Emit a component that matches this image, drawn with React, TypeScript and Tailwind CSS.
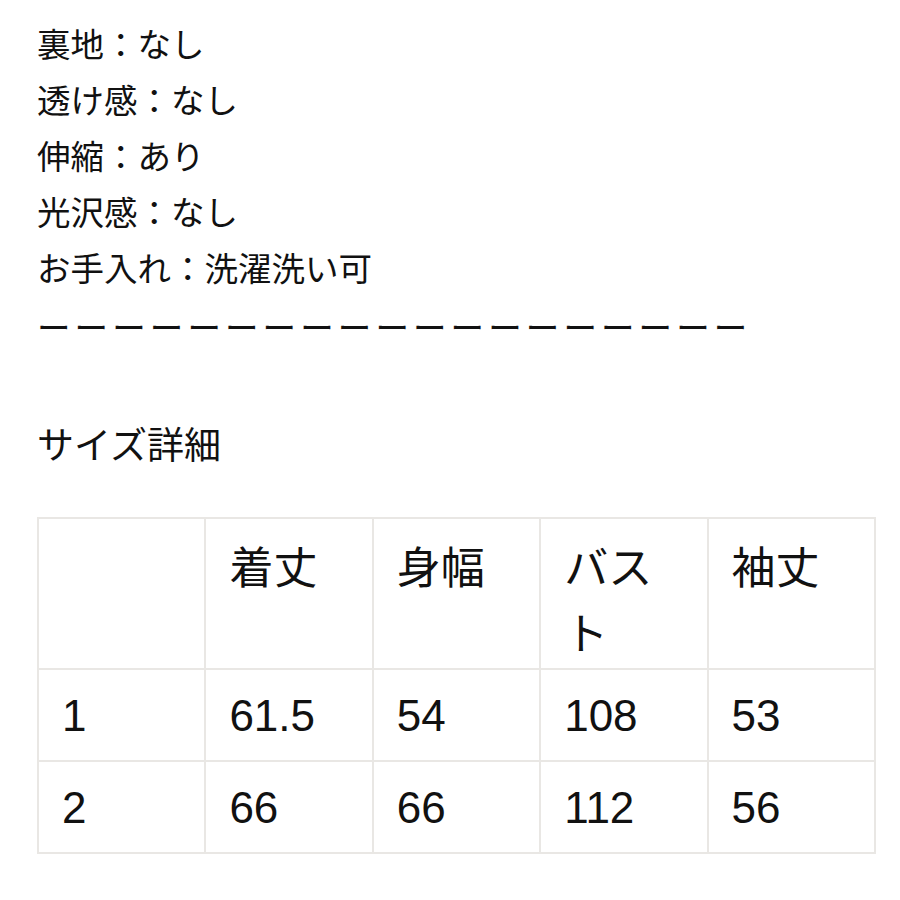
export default function App() {
  const lines = ["裏地：なし", "透け感：なし", "伸縮：あり", "光沢感：なし", "お手入れ：洗濯洗い可"];
  const head = ["", "着丈", "身幅", "バスト", "袖丈"];
  const rows = [
    ["1", "61.5", "54", "108", "53"],
    ["2", "66", "66", "112", "56"],
  ];
  return (
    <div
      className="w-[900px] h-[900px] bg-white text-[#111] pl-[37px] pt-[18px]"
      style={{ fontFamily: '"Liberation Sans", "Noto Sans CJK JP", sans-serif' }}
    >
      {lines.map((l) => (
        <div key={l} className="text-[33.5px] leading-[56px]">
          {l}
        </div>
      ))}
      <div className="pt-[3px] text-[33.5px] leading-[56px] tracking-[4.1px] whitespace-nowrap">
        {"ー".repeat(19)}
      </div>
      <div className="mt-[62px] text-[37px] leading-[56px]">サイズ詳細</div>
      <table className="mt-[42px] w-[839px] table-fixed border-collapse text-[44px] leading-[56px]">
        <tbody>
          <tr>
            {head.map((h, i) => (
              <td
                key={i}
                className="h-[150px] border-2 border-[#e9e7e4] align-top pl-[23px] pr-[25px] pt-[17px] pb-0 leading-[66px]"
              >
                {h}
              </td>
            ))}
          </tr>
          {rows.map((r, ri) => (
            <tr key={ri}>
              {r.map((c, ci) => (
                <td
                  key={ci}
                  className="border-2 border-[#e9e7e4] align-middle pl-[23px] pr-[25px] pt-[18px] pb-[16px]"
                >
                  {c}
                </td>
              ))}
            </tr>
          ))}
        </tbody>
      </table>
    </div>
  );
}
